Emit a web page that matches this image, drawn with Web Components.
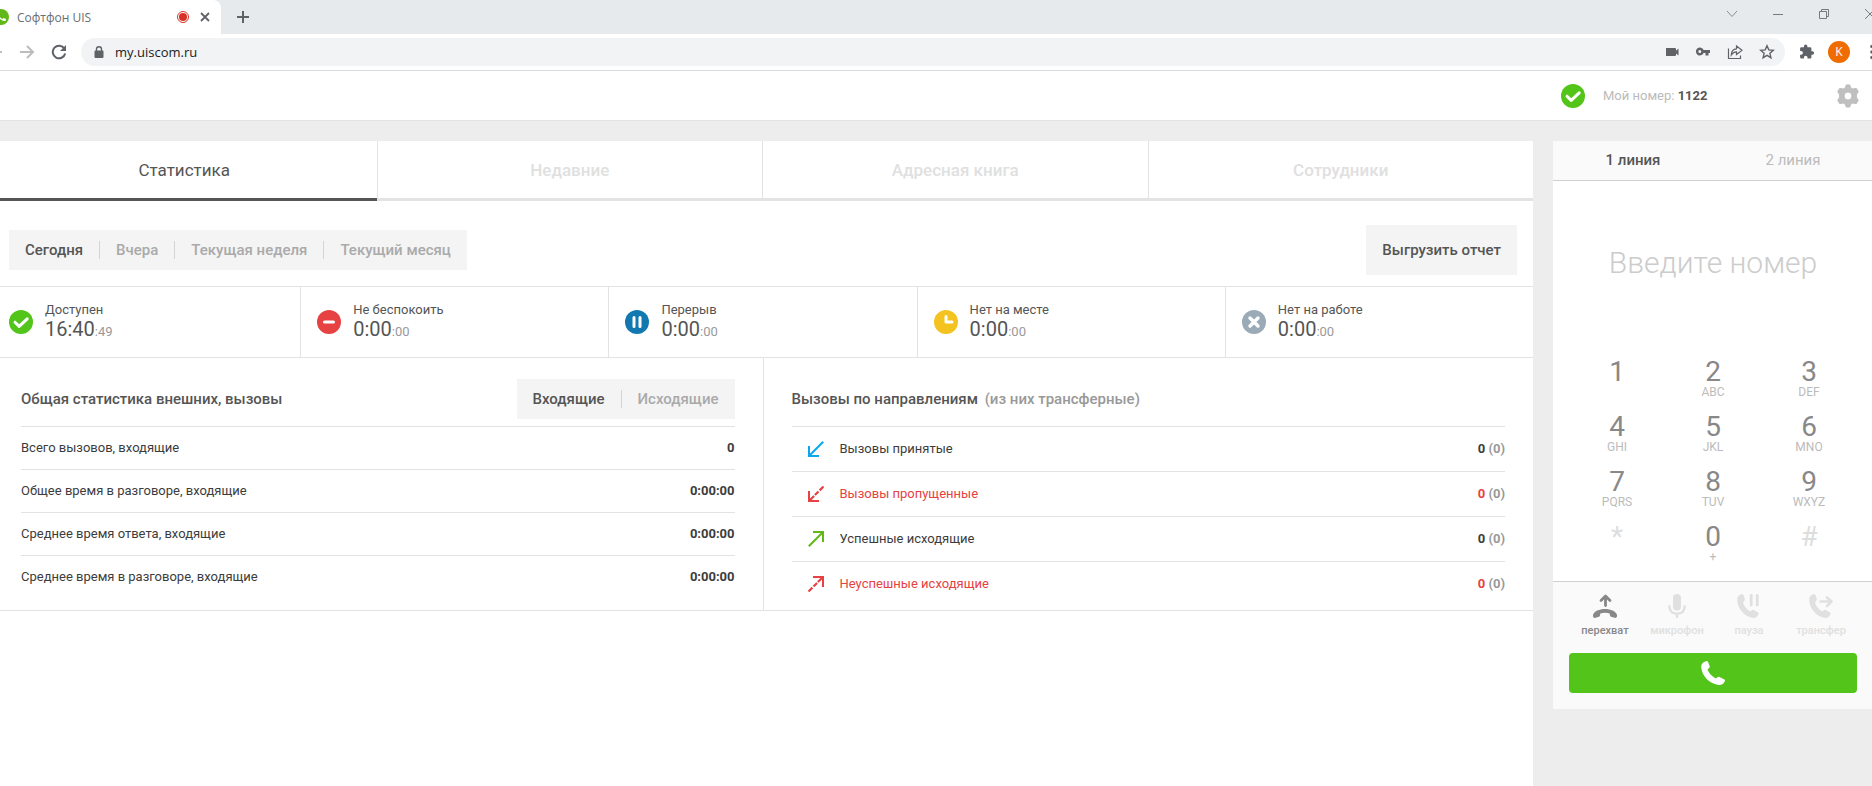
<!DOCTYPE html>
<html lang="ru">
<head>
<meta charset="utf-8">
<title>Софтфон UIS</title>
<style>
html, body { margin: 0; }
body { display: flex; flex-direction: column; min-height: 100vh; overflow: hidden; background: #ededed; font-family: Roboto, "Liberation Sans", sans-serif; color: #555; }
soft-phone { flex: 1; }
</style>
</head>
<body>
<browser-bar></browser-bar>
<soft-phone></soft-phone>
<script>
const base = `*{box-sizing:border-box}button,a,input{font:inherit;color:inherit;margin:0}button{border:0;padding:0;background:none;cursor:pointer}svg{display:block;flex:none}`;
function define(name, css, html) {
  const t = document.createElement('template');
  const text = typeof html === 'function' ? html : () => html;
  customElements.define(name, class extends HTMLElement {
    constructor() { super(); this.attachShadow({ mode: 'open' }); }
    connectedCallback() {
      if (this.shadowRoot.childNodes.length) return;
      const tpl = t.cloneNode();
      tpl.innerHTML = `<style>${base}${css}</style>${text(this)}`;
      this.shadowRoot.append(tpl.content.cloneNode(true));
    }
  });
}

const handset = 'M5 .2C6-.1 6.700.1 7.100.9L8.700 5.200C9 6 8.500 6.700 7.800 7.300L6.500 8.800C8 12.300 11 15.600 14.800 17.500L16.400 16.300C17 15.700 17.800 15.600 18.500 15.900L23 18.200C23.900 18.700 24.200 19.300 23.800 20.300C22.900 22.800 20.800 24 18 23.900C8.600 23.100.6 14.800.2 6C.1 2.900 1.900 1 5 .2Z';
const icons = {
  check: [24, '<circle cx="12" cy="12" r="12" fill="#52c41a"/><path d="M6 12.200l4.200 4.200L18.200 8.800" fill="none" stroke="#fff" stroke-width="3" stroke-linecap="round" stroke-linejoin="round"/>'],
  minus: [24, '<circle cx="12" cy="12" r="12" fill="#e64242"/><path d="M7.500 12h9" stroke="#fff" stroke-width="3" stroke-linecap="round"/>'],
  pause: [24, '<circle cx="12" cy="12" r="12" fill="#1179b0"/><path d="M9 7.500v9M15 7.500v9" stroke="#fff" stroke-width="3" stroke-linecap="round"/>'],
  clock: [24, '<circle cx="12" cy="12" r="12" fill="#f4c31f"/><path d="M12 6.500V12h6" fill="none" stroke="#fff" stroke-width="3" stroke-linecap="round" stroke-linejoin="round"/>'],
  cross: [24, '<circle cx="12" cy="12" r="12" fill="#9aabb7"/><path d="M8 8l8 8M16 8l-8 8" stroke="#fff" stroke-width="3.400" stroke-linecap="round"/>'],
  gear: [24, '<path fill-rule="evenodd" d="M10.300.9h3.400l1 2.900 2.200 1.200 3.400-.7 2 3.400-1.800 2.800v3l1.800 2.800-2 3.400-3.400-.7-2.200 1.200-1 2.900h-3.400l-1-2.900L7.100 19l-3.400.7-2-3.400 1.800-2.800v-3L1.700 7.700l2-3.400 3.400.7 2.200-1.200zM12 8a4 4 0 100 8 4 4 0 000-8z" fill="#bfbfbf" stroke="#bfbfbf" stroke-linejoin="round"/>'],
  'in': [16, '<path d="M15.200.8L2 14" fill="none" stroke="currentColor" stroke-width="2"/><path d="M1 5v10h10" fill="none" stroke="currentColor" stroke-width="2"/>'],
  'in-missed': [16, '<path d="M15.500.5L2 14" fill="none" stroke="currentColor" stroke-width="2.200" stroke-dasharray="5.500 1.600 5 1.200 20"/><path d="M1 5v10h10" fill="none" stroke="currentColor" stroke-width="2"/>'],
  out: [16, '<path d="M.8 15.200L14 2" fill="none" stroke="currentColor" stroke-width="2"/><path d="M5 1h10v10" fill="none" stroke="currentColor" stroke-width="2"/>'],
  'out-missed': [16, '<path d="M.5 15.500L14 2" fill="none" stroke="currentColor" stroke-width="2.200" stroke-dasharray="5.500 1.600 5 1.200 20"/><path d="M5 1h10v10" fill="none" stroke="currentColor" stroke-width="2"/>'],
  pickup: [24, '<path d="M12.500 11.500V2.500M8 6.500L12.500 2 17 6.500" fill="none" stroke="currentColor" stroke-width="2.800" stroke-linejoin="round" stroke-linecap="round"/><path fill="currentColor" d="M12 15C18 15 22.500 17.300 23.800 20.300C24.200 21.500 24.100 22.900 23.300 23.600C22.800 24.100 22 24 21.400 23.800L18.100 22.700C17.200 22.300 17 21.800 16.900 21L16.700 19.600C13.800 18.600 10.200 18.600 7.300 19.600L7.100 21C7 21.800 6.800 22.300 5.900 22.700L2.600 23.800C2 24 1.200 24.100.7 23.600C-.1 22.900-.2 21.500.2 20.300C1.500 17.300 6 15 12 15Z"/>'],
  mic: [24, '<rect x="8" y="0" width="8" height="16.500" rx="4" fill="currentColor"/><path d="M4.300 12.500c.4 4.700 3.400 7.300 7.700 7.300s7.300-2.600 7.700-7.300M12 20v3" fill="none" stroke="currentColor" stroke-width="2.400" stroke-linecap="round"/>'],
  hold: [24, `<path d="${handset}" transform="scale(.9 1)" fill="currentColor"/><path d="M14.200 1.500v9.500M20.200 1.500v9.500" stroke="currentColor" stroke-width="2.800" stroke-linecap="round"/>`],
  transfer: [24, `<path d="${handset}" transform="scale(.9 1)" fill="currentColor"/><path d="M11.500 7.500H22M18 3.500l4.500 4L18 12" fill="none" stroke="currentColor" stroke-width="2.600" stroke-linecap="round" stroke-linejoin="round"/>`],
  call: [24, `<path d="${handset}" fill="currentColor"/>`],
  back: [16, '<path d="M2 8h13M8 1.500L1.500 8 8 14.500" fill="none" stroke="#bdc0c4" stroke-width="2"/>'],
  forward: [16, '<path d="M1 8h12.500M8 2l6 6-6 6" fill="none" stroke="#babcbe" stroke-width="2"/>'],
  reload: [16, '<path d="M13.400 4.600A6.300 6.300 0 1014.200 9.500" fill="none" stroke="#5f6368" stroke-width="2"/><path d="M15 1v6H9z" fill="#5f6368"/>'],
  lock: [12, '<path d="M2.500 4.500h7a1 1 0 011 1V11a1 1 0 01-1 1h-7a1 1 0 01-1-1V5.500a1 1 0 011-1z" fill="#5f6368"/><path d="M3.500 5V3.200a2.500 2.500 0 015 0V5" fill="none" stroke="#5f6368" stroke-width="1.400"/>'],
  camera: [14, '<path d="M1 3h9a1 1 0 011 1v1.800L13.500 3.500v7L11 8.500V10a1 1 0 01-1 1H1z" fill="#5f6368"/>'],
  key: [16, '<path d="M8.600 6A4 4 0 108.600 9H10.500v2.500h3V9H15V6zM4.800 9a1.500 1.500 0 110-3 1.500 1.500 0 010 3z" fill="#5f6368" fill-rule="evenodd"/>'],
  share: [16, '<path d="M1.500 4.500v10h12v-3M9.500 4.800V2L15 6.300l-5.500 4.200V7.800C7 7.800 5.500 9 4.300 11c0-3.700 2-6 5.200-6.200z" fill="none" stroke="#5f6368" stroke-width="1.200"/>'],
  star: [16, '<path d="M8 1.800l1.800 4.100 4.500.4-3.400 3 1 4.400L8 11.400l-3.900 2.300 1-4.400-3.400-3 4.500-.4z" fill="none" stroke="#5f6368" stroke-width="1.400"/>'],
  puzzle: [16, '<path d="M13.400 7.300h-1V4.600A1.300 1.300 0 0011.100 3.300H8.400V2.300a1.700 1.700 0 00-3.400 0v1H2.400A1.300 1.300 0 001.100 4.600v2.500h1a1.800 1.800 0 010 3.600h-1v2.500a1.300 1.300 0 001.300 1.300h2.500v-1a1.800 1.800 0 013.600 0v1h2.600a1.300 1.300 0 001.300-1.300v-2.500h1a1.700 1.700 0 000-3.400z" fill="#5f6368"/>'],
  dots: [16, '<circle cx="8" cy="2.500" r="1.800"/><circle cx="8" cy="8" r="1.800"/><circle cx="8" cy="13.500" r="1.800"/>'],
  record: [12, '<circle cx="6" cy="6" r="5.500" fill="#fff" stroke="#d93025"/><circle cx="6" cy="6" r="4" fill="#d93025"/>'],
  'tab-close': [12, '<path d="M2 2l8 8M10 2l-8 8" stroke="#5f6368" stroke-width="1.800"/>'],
  plus: [12, '<path d="M6 0v12M0 6h12" stroke="#5f6368" stroke-width="2"/>'],
  chevron: [12, '<path d="M1 3l5 5.500L11 3" fill="none" stroke="#8b8f92"/>'],
  minimize: [12, '<path d="M1 6.500h10" stroke="#777b7e"/>'],
  restore: [12, '<path d="M3.500 3V1.500h7v7H9M1.500 3.500h7v7h-7z" fill="none" stroke="#777b7e"/>'],
  'win-close': [12, '<path d="M1 1l10 10M11 1L1 11" stroke="#777b7e"/>'],
  favicon: [16, '<circle cx="8" cy="8" r="8" fill="#61b81b"/><path d="M4 4c0 4 4 8 8.500 8l.5-2-2.500-1-1 1C8 9.500 6.500 8 6 6.500L7 5 6 3z" fill="#fff"/>']
};
define('ui-icon', ':host{display:block;flex:none}', el => {
  const [n, body] = icons[el.getAttribute('name')];
  return `<svg width="${n}" height="${n}" viewBox="0 0 ${n} ${n}" aria-hidden="true">${body}</svg>`;
});

define('browser-bar', `
:host{display:block;flex:none;overflow:hidden;background:#fff;border-bottom:1px solid #d9dadc;font-family:"Open Sans","Noto Sans",sans-serif}
.strip{display:flex;height:34px;background:#e6eaed}
.tab{display:flex;align-items:center;width:221px;background:#fff;border-radius:0 8px 0 0;font-size:12px;color:#6b6e72}
.tab ui-icon[name=favicon]{margin-left:-7px}
.title{flex:1;padding-left:8px}
.tab button{margin-right:10px;margin-left:10px}
.add{margin:0 16px}
.controls{display:flex;gap:34px;margin:8px -4px 0 auto;align-self:flex-start}
.row{display:flex;align-items:center;height:36px}
.nav{display:flex;gap:16px;margin-left:-13px}
.box{display:flex;align-items:center;flex:1;height:28px;margin:0 14px;padding:0 10px 0 12px;border-radius:14px;background:#f1f3f4}
input{flex:1;min-width:0;border:0;background:none;outline:0;padding:0;margin-left:10px;font-size:13px;color:#202124}
.tools{display:flex;align-items:center;gap:16px}
.me{width:22px;height:22px;border-radius:50%;background:#ef6c00;color:#fff;font-size:12px;line-height:22px;text-align:center;margin:0 14px 0 13px}
.menu{margin-right:-8px;fill:#5f6368}
`, `
<div class="strip"><div class="tab"><ui-icon name="favicon"></ui-icon><span class="title">Софтфон UIS</span><ui-icon name="record"></ui-icon><button aria-label="Закрыть вкладку"><ui-icon name="tab-close"></ui-icon></button></div>
<button class="add" aria-label="Новая вкладка"><ui-icon name="plus"></ui-icon></button>
<div class="controls"><button aria-label="Поиск вкладок"><ui-icon name="chevron"></ui-icon></button><button aria-label="Свернуть"><ui-icon name="minimize"></ui-icon></button><button aria-label="Развернуть"><ui-icon name="restore"></ui-icon></button><button aria-label="Закрыть"><ui-icon name="win-close"></ui-icon></button></div></div>
<div class="row"><div class="nav"><button aria-label="Назад"><ui-icon name="back"></ui-icon></button><button aria-label="Вперёд"><ui-icon name="forward"></ui-icon></button><button aria-label="Обновить"><ui-icon name="reload"></ui-icon></button></div>
<div class="box"><ui-icon name="lock"></ui-icon><input aria-label="Адрес" value="my.uiscom.ru"><div class="tools"><ui-icon name="camera"></ui-icon><ui-icon name="key"></ui-icon><ui-icon name="share"></ui-icon><ui-icon name="star"></ui-icon></div></div>
<ui-icon name="puzzle"></ui-icon><button class="me">K</button><ui-icon class="menu" name="dots"></ui-icon></div>`);

/* Segmented switch: the items come in as a "|"-separated list, the first is active. */
define('seg-switch', `
:host{display:flex;align-items:center;height:40px;background:#f4f4f4}
button{height:18px;line-height:18px;padding:0 16px;font-size:15px;font-weight:500;color:#aaa;border-left:1px solid #d4d4d4}
style+button{border-left:0;color:#555}
`, el => el.getAttribute('items').split('|').map(s => `<button>${s}</button>`).join(''));

define('status-cell', `
:host{display:flex;align-items:center;gap:12px;flex:1 1 0;height:70px;padding:0 16px;border-left:1px solid #e3e3e3}
.name{font-size:13px;line-height:16px}
.time{font-size:20px;line-height:22px}
.time span{font-size:13px;color:#999}
`, el => `<ui-icon name="${el.getAttribute('icon')}"></ui-icon><div><div class="name"><slot></slot></div><div class="time">${el.getAttribute('time')}<span>:${el.getAttribute('sec')}</span></div></div>`);

define('stats-panel', `
:host{display:block;background:#fff}
.tabs{display:flex}
.tabs button{flex:1 1 0;height:60px;border-bottom:3px solid #e3e3e3;border-left:1px solid #e3e3e3;font-size:17px;font-weight:500;color:#e0e0e0}
.tabs .on{color:#555;font-weight:400;border-bottom-color:#555;border-left:0}
.filter{display:flex;justify-content:space-between;align-items:center;height:85px;padding:13px 16px 0 17px}
.export{height:50px;padding:0 16px;background:#f4f4f4;font-size:15px;font-weight:500}
.cells{display:flex;border-top:1px solid #e3e3e3;border-bottom:1px solid #e3e3e3}
.split{display:grid;grid-template-columns:1fr 1fr;border-bottom:1px solid #e3e3e3}
section{padding:0 28px 3px}
section:first-child{padding-left:29px}
section+section{border-left:1px solid #e3e3e3}
header{display:flex;justify-content:space-between;align-items:center;height:68px;padding-top:14px}
h2{margin:0;font-size:15px;font-weight:500;white-space:nowrap}
h2 span{margin-left:3px;color:#999}
table{width:100%;border-collapse:collapse;font-size:13px;color:#3c3c3c}
tr{border-top:1px solid #e3e3e3}
td,th{height:43px;padding:0 0 2px;font-weight:400;text-align:left}
td{text-align:right;font-weight:700}
.dir td,.dir th{height:45px}
td i{font-style:normal;color:#999}
td.ic{width:48px;padding-left:16px;padding-bottom:0}
.bad td,.bad th{color:#e64242}
.bad td i{color:#999}
.blue{color:#0ca6ee}.green{color:#61b81b}
`, `
<nav class="tabs"><button class="on">Статистика</button><button>Недавние</button><button>Адресная книга</button><button>Сотрудники</button></nav>
<div class="filter"><seg-switch items="Сегодня|Вчера|Текущая неделя|Текущий месяц"></seg-switch><button class="export">Выгрузить отчет</button></div>
<div class="cells">
<status-cell icon="check" time="16:40" sec="49">Доступен</status-cell>
<status-cell icon="minus" time="0:00" sec="00">Не беспокоить</status-cell>
<status-cell icon="pause" time="0:00" sec="00">Перерыв</status-cell>
<status-cell icon="clock" time="0:00" sec="00">Нет на месте</status-cell>
<status-cell icon="cross" time="0:00" sec="00">Нет на работе</status-cell></div>
<div class="split">
<section><header><h2>Общая статистика внешних, вызовы</h2><seg-switch items="Входящие|Исходящие"></seg-switch></header>
<table><tr><th scope="row">Всего вызовов, входящие</th><td>0</td></tr><tr><th scope="row">Общее время в разговоре, входящие</th><td>0:00:00</td></tr><tr><th scope="row">Среднее время ответа, входящие</th><td>0:00:00</td></tr><tr><th scope="row">Среднее время в разговоре, входящие</th><td>0:00:00</td></tr></table></section>
<section><header><h2>Вызовы по направлениям <span>(из них трансферные)</span></h2></header>
<table class="dir"><tr><td class="ic blue"><ui-icon name="in"></ui-icon></td><th scope="row">Вызовы принятые</th><td>0 <i>(0)</i></td></tr><tr class="bad"><td class="ic"><ui-icon name="in-missed"></ui-icon></td><th scope="row">Вызовы пропущенные</th><td>0 <i>(0)</i></td></tr><tr><td class="ic green"><ui-icon name="out"></ui-icon></td><th scope="row">Успешные исходящие</th><td>0 <i>(0)</i></td></tr><tr class="bad"><td class="ic"><ui-icon name="out-missed"></ui-icon></td><th scope="row">Неуспешные исходящие</th><td>0 <i>(0)</i></td></tr></table></section></div>`);

define('dial-key', `
:host{display:block}
button{display:block;width:100%;height:55px;text-align:center;color:#888}
b{display:block;font-weight:400;font-size:28px;line-height:28px}
span{display:block;height:14px;font-size:12px;line-height:12px;color:#bbb}
:host([off]) button{color:#ddd}
`, el => `<button><b>${el.getAttribute('digit')}</b><span><slot></slot></span></button>`);

define('call-action', `
:host{display:block;flex:1 1 0;color:#e0e0e0}
:host([on]){color:#888}
button{display:flex;flex-direction:column;align-items:center;width:100%;font-size:11px;line-height:14px;font-weight:500;gap:6px}
`, el => `<button><ui-icon name="${el.getAttribute('icon')}"></ui-icon><slot></slot></button>`);

define('dial-pad', `
:host{display:block;align-self:flex-start;background:#fff}
.lines{display:flex;height:40px;background:#fafafa;border-bottom:1px solid #d0d0d0;font-size:15px}
.lines button{flex:1;padding-bottom:2px;color:#bbb}
.lines .on{color:#555;font-weight:500}
input{display:block;width:100%;height:162px;border:0;outline:0;padding:0;background:none;text-align:center;font-size:30px;font-weight:300}
input::placeholder{color:#ccc;opacity:1}
.keys{display:grid;grid-template-columns:repeat(3,1fr);padding:8px 16px 10px}
.foot{background:#fafafa;border-top:1px solid #d0d0d0;padding:12px 16px 16px}
.acts{display:flex}
.call{display:flex;align-items:center;justify-content:center;width:100%;height:40px;margin-top:15px;border-radius:4px;background:#52c41a;color:#fff}
`, `
<div class="lines"><button class="on">1 линия</button><button>2 линия</button></div>
<input type="tel" aria-label="Номер телефона" placeholder="Введите номер">
<div class="keys"><dial-key digit="1"></dial-key><dial-key digit="2">ABC</dial-key><dial-key digit="3">DEF</dial-key><dial-key digit="4">GHI</dial-key><dial-key digit="5">JKL</dial-key><dial-key digit="6">MNO</dial-key><dial-key digit="7">PQRS</dial-key><dial-key digit="8">TUV</dial-key><dial-key digit="9">WXYZ</dial-key><dial-key digit="*" off></dial-key><dial-key digit="0">+</dial-key><dial-key digit="#" off></dial-key></div>
<div class="foot"><div class="acts"><call-action icon="pickup" on>перехват</call-action><call-action icon="mic">микрофон</call-action><call-action icon="hold">пауза</call-action><call-action icon="transfer">трансфер</call-action></div>
<button class="call" aria-label="Позвонить"><ui-icon name="call"></ui-icon></button></div>`);

define('soft-phone', `
:host{display:flex;flex-direction:column}
.top{display:flex;align-items:center;height:50px;padding-right:12px;background:#fff;border-bottom:1px solid #e3e3e3;font-size:13px;color:#bbb}
.who{display:flex;align-items:center;gap:18px;width:275px;margin-left:auto}
strong{color:#555}
.main{flex:1;display:grid;grid-template-columns:minmax(0,1fr) 320px;gap:20px;margin:20px -1px 0 -8px}
`, `
<div class="top"><div class="who"><ui-icon name="check"></ui-icon><span>Мой номер: <strong>1122</strong></span></div><button aria-label="Настройки"><ui-icon name="gear"></ui-icon></button></div>
<div class="main"><stats-panel></stats-panel><dial-pad></dial-pad></div>`);
</script>
</body>
</html>
